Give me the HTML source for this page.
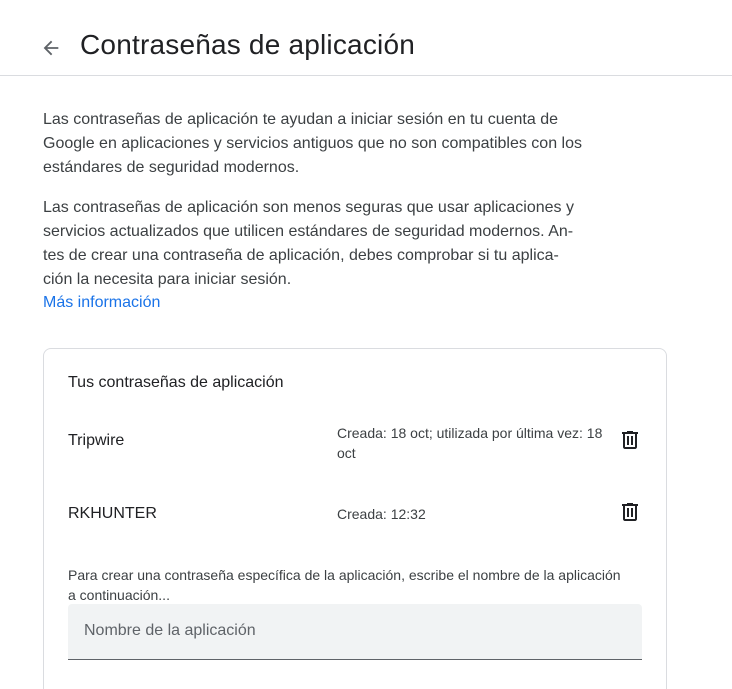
<!DOCTYPE html>
<html style="overflow:hidden;height:689px"><head><meta charset="utf-8"><style>
body{margin:0;width:732px;height:689px;overflow:hidden;background:#fff;font-family:"Liberation Sans",Arial,sans-serif;color:#3c4043;position:relative}
.a{position:absolute;white-space:nowrap}
</style></head><body>
<svg class="a" style="left:40px;top:37px" width="22" height="22" viewBox="0 0 24 24"><path d="M20 11H7.8l5.6-5.6L12 4l-8 8 8 8 1.4-1.4L7.8 13H20z" fill="#5f6368"/></svg>
<div class="a" style="left:80px;top:29px;font-size:28px;letter-spacing:0.2px;color:#202124">Contraseñas de aplicación</div>
<div class="a" style="left:0;top:75px;width:732px;height:1px;background:#dadce0"></div>
<div class="a" style="left:43px;top:108px;font-size:16px;line-height:24px;color:#3c4043">Las contraseñas de aplicación te ayudan a iniciar sesión en tu cuenta de<br>Google en aplicaciones y servicios antiguos que no son compatibles con los<br>estándares de seguridad modernos.</div>
<div class="a" style="left:43px;top:196px;font-size:16px;line-height:24px;color:#3c4043">Las contraseñas de aplicación son menos seguras que usar aplicaciones y<br>servicios actualizados que utilicen estándares de seguridad modernos. An-<br>tes de crear una contraseña de aplicación, debes comprobar si tu aplica-<br>ción la necesita para iniciar sesión.</div>
<div class="a" style="left:43px;top:294px;font-size:16px;color:#1a73e8">Más información</div>
<div class="a" style="left:43px;top:348px;width:622px;height:360px;border:1px solid #dadce0;border-radius:8px"></div>
<div class="a" style="left:68px;top:374px;font-size:16px;color:#202124">Tus contraseñas de aplicación</div>
<div class="a" style="left:68px;top:432px;font-size:16px;color:#202124">Tripwire</div>
<div class="a" style="left:337px;top:423px;font-size:14px;line-height:20px;color:#3c4043">Creada: 18 oct; utilizada por última vez: 18<br>oct</div>
<div class="a" style="left:68px;top:505px;font-size:16px;color:#202124">RKHUNTER</div>
<div class="a" style="left:337px;top:506px;font-size:14px;color:#3c4043">Creada: 12:32</div>
<svg class="a" style="left:618px;top:428px" width="24" height="24" viewBox="0 0 24 24"><path d="M15 4V3H9v1H4v2h1v13c0 1.1.9 2 2 2h10c1.1 0 2-.9 2-2V6h1V4h-5zm2 15H7V6h10v13zM9 8h2v9H9zm4 0h2v9h-2z" fill="#202124"/></svg>
<svg class="a" style="left:618px;top:500px" width="24" height="24" viewBox="0 0 24 24"><path d="M15 4V3H9v1H4v2h1v13c0 1.1.9 2 2 2h10c1.1 0 2-.9 2-2V6h1V4h-5zm2 15H7V6h10v13zM9 8h2v9H9zm4 0h2v9h-2z" fill="#202124"/></svg>
<div class="a" style="left:68px;top:565px;font-size:14px;line-height:20px;color:#3c4043">Para crear una contraseña específica de la aplicación, escribe el nombre de la aplicación<br>a continuación...</div>
<div class="a" style="left:68px;top:604px;width:574px;height:55px;background:#f1f3f4;border-bottom:1px solid #5f6368;border-radius:4px 4px 0 0"></div>
<div class="a" style="left:84px;top:622px;font-size:16px;color:#5f6368">Nombre de la aplicación</div>
</body></html>
